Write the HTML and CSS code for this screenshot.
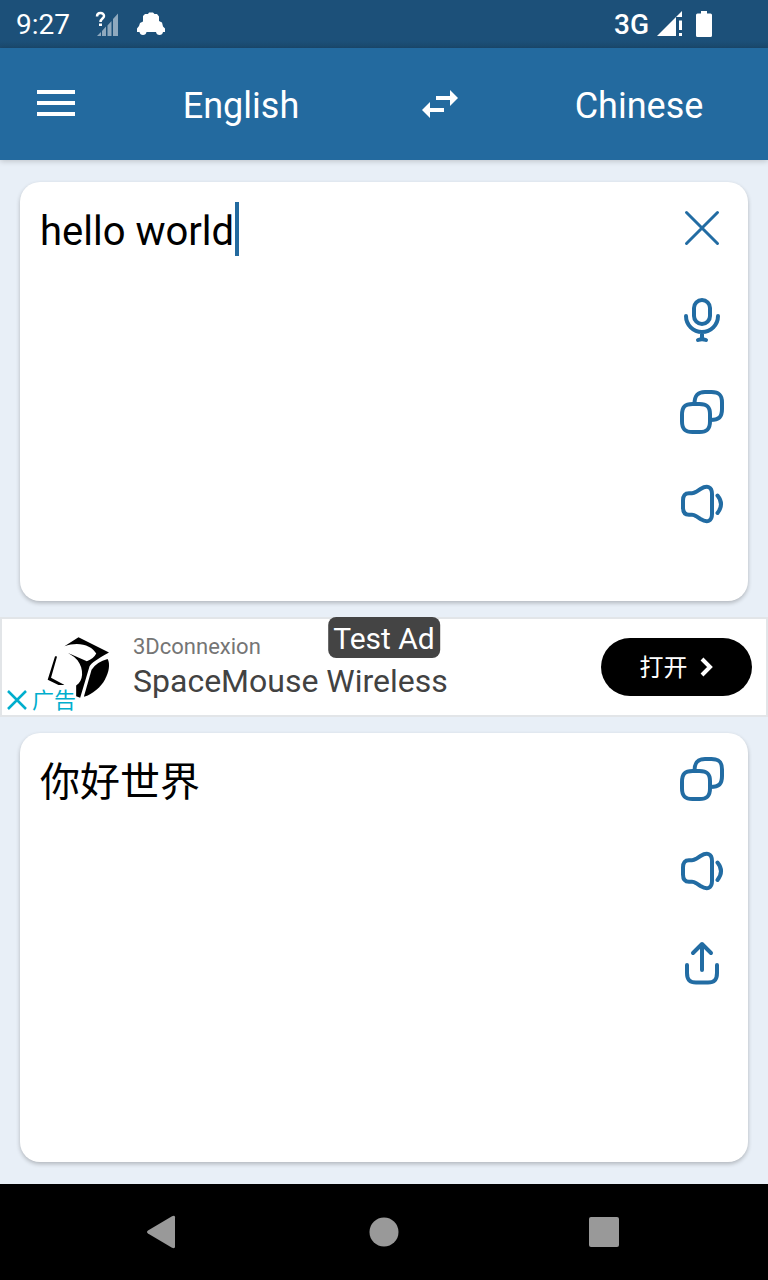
FILE: index.html
```html
<!DOCTYPE html>
<html lang="en">
<head>
<meta charset="utf-8">
<meta name="viewport" content="width=device-width, initial-scale=1">
<title>Translator</title>
<link rel="stylesheet" href="styles.css">
</head>
<body>
<svg class="sprite" aria-hidden="true">
  <symbol id="copy" viewBox="0 0 48 48">
    <path d="M4 27C4 18.500 7 16 14.500 16h7C29 16 32 18.500 32 26v7.500c0 7.500-3 10.500-10.500 10.500h-7C7 44 4 41 4 33.500Z"/>
    <path d="M16.500 16C16.500 7 20 4 27 4h6.500C41 4 44 7 44 14.500V21c0 8-3 11-11.500 11"/>
  </symbol>
  <symbol id="speaker" viewBox="0 0 48 48">
    <path d="M5 20.500c0-5 2-7.300 6-7.300h3c2 0 3-.7 4.500-1.600l4-2.600C29.500 4.700 34 7 34 14v20c0 7-4.500 9.300-11.500 5l-4-2.600c-1.500-.9-2.500-1.600-4.500-1.600h-3c-4 0-6-2.300-6-7.300Z"/>
    <path d="M39.500 15.500q7 8.500 0 17.500"/>
  </symbol>
</svg>

<header class="status">
  <time class="clock">9:27</time>
  <svg class="status-cell" width="24" height="28" viewBox="0 0 24 28" aria-hidden="true">
    <path fill="#8fa9be" d="M2 26l4-4v4zM7 21l4-4.500V26H7zM12.500 15.500l4-4.500v15h-4zM18 9l5-5.500V26h-5z"/>
    <path fill="none" stroke="#fff" stroke-width="2.500" d="M2 6.500C2 2 9 2 9 6c0 2.500-3.500 2.500-3.500 6"/>
    <path fill="#fff" d="M4 13.500h3V16H4z"/>
  </svg>
  <svg class="status-car" width="28" height="24" viewBox="0 0 28 24" aria-hidden="true">
    <path fill="#fff" d="M0 16.500L2 14 3 11l3-1.500V4l2-2h3l1-1.500h4L17.500 2H20l2 2.500v4.500l3 1.500 1 4 2 2V20h-2q-.5 3-3.500 3T19 20H9.500q-.5 3-3.500 3T2.500 20H0z"/>
  </svg>
  <span class="network">3G</span>
  <svg width="26" height="26" viewBox="0 0 26 26" aria-hidden="true">
    <path fill="#fff" d="M0 25L25 0v6h-6v19zM22 9.500h3V19h-3zM22 22h3v3h-3z"/>
  </svg>
  <svg class="battery" width="16" height="26" viewBox="0 0 16 26" aria-hidden="true">
    <path fill="#fff" d="M5 0h6v2.500h3.500Q16 2.500 16 4v20.500q0 1.500-1.500 1.500h-13Q0 26 0 24.500V4q0-1.500 1.500-1.500H5z"/>
  </svg>
</header>

<nav class="toolbar">
  <button class="menu" aria-label="Menu">
    <svg width="38" height="28" viewBox="0 0 38 28"><path fill="#fff" d="M0 0h38v4H0zM0 11h38v4H0zM0 22h38v4H0z"/></svg>
  </button>
  <button class="language">English</button>
  <button class="swap" aria-label="Swap languages">
    <svg width="36" height="28" viewBox="0 0 36 28"><path fill="#fff" d="M14 6h14V0l8 8-8 8v-6H14zM22 18H8v-6l-8 8 8 8v-6h14z"/></svg>
  </button>
  <button class="language">Chinese</button>
</nav>

<main class="content">
  <section class="card source">
    <div class="entry">
      <textarea class="text" aria-label="Text to translate" spellcheck="false">hello world</textarea>
      <span class="caret"></span>
    </div>
    <div class="actions">
      <button aria-label="Clear"><svg class="icon thin" viewBox="0 0 48 48"><path d="M8.500 8.500l31 31M39.500 8.500l-31 31"/></svg></button>
      <button aria-label="Speak"><svg class="icon" viewBox="0 0 48 48"><rect x="16" y="4" width="16" height="24" rx="8"/><path d="M8 20a16 16 0 0 0 32 0M24 36v7M20 44q4-1.500 8 0"/></svg></button>
      <button aria-label="Copy"><svg class="icon"><use href="#copy"/></svg></button>
      <button aria-label="Listen"><svg class="icon"><use href="#speaker"/></svg></button>
    </div>
  </section>

  <aside class="ad">
    <svg class="ad-logo" viewBox="135 135 200 190" aria-hidden="true">
      <path d="M193 168L235 141 326 187Q276 214 268 228L240 322 228 317V285C250 274 252 236 232 210Q222 198 204 188L260 213Q280 206 288 190C275 165 235 152 193 168Z"/>
      <path d="M322 206C330 222 326 244 314 267 303 288 278 311 251 319L274 238Q290 214 322 206Z"/>
      <path d="M165 198L171 199 153 262 192 283V286H180L143 268Z"/>
    </svg>
    <div class="ad-copy">
      <span class="advertiser">3Dconnexion</span>
      <span class="product">SpaceMouse Wireless</span>
    </div>
    <button class="open">打开
      <svg width="14" height="20" viewBox="0 0 14 20" aria-hidden="true"><path fill="none" stroke="#fff" stroke-width="4" d="M2 2l8 8-8 8"/></svg>
    </button>
    <button class="ad-choice">
      <svg width="20" height="20" viewBox="0 0 20 20" aria-hidden="true"><path fill="none" stroke="#00aecd" stroke-width="2.500" d="M1 1l18 18M19 1L1 19"/></svg>
      <span>广告</span>
    </button>
    <span class="test-label">Test Ad</span>
  </aside>

  <section class="card result">
    <p class="text">你好世界</p>
    <div class="actions">
      <button aria-label="Copy translation"><svg class="icon"><use href="#copy"/></svg></button>
      <button aria-label="Listen to translation"><svg class="icon"><use href="#speaker"/></svg></button>
      <button aria-label="Share"><svg class="icon" viewBox="0 0 48 48"><path d="M24 31V5M15 14l9-9 9 9M9 26v8c0 7 3 9.500 9 9.500h12c6 0 9-2.500 9-9.500v-8"/></svg></button>
    </div>
  </section>
</main>

<nav class="system-nav">
  <button aria-label="Back"><svg width="48" height="48" viewBox="0 0 48 48"><path fill="#999" d="M8 22.500L32 8.300q3-1.300 3 1v29.400q0 2.300-3 1L8 25.500q-2-1.500 0-3z"/></svg></button>
  <button aria-label="Home"><svg width="48" height="48" viewBox="0 0 48 48"><circle cx="24" cy="24" r="14.500" fill="#999"/></svg></button>
  <button aria-label="Recent apps"><svg width="48" height="48" viewBox="0 0 48 48"><rect x="9" y="9" width="30" height="30" rx="2" fill="#999"/></svg></button>
</nav>
</body>
</html>
```

FILE: styles.css
```css
* {
  box-sizing: border-box;
}

body {
  margin: 0;
  min-height: 100vh;
  display: flex;
  flex-direction: column;
  background: #e8eff7;
  color: #000;
  font-family: Roboto, "Noto Sans CJK SC", sans-serif;
}

button {
  display: flex;
  align-items: center;
  justify-content: center;
  padding: 0;
  border: 0;
  background: none;
  color: inherit;
  font: inherit;
}

svg {
  display: block;
  flex: none;
}

.sprite {
  position: absolute;
  width: 0;
  height: 0;
}

.status {
  height: 48px;
  padding: 0 56px 0 16px;
  display: flex;
  align-items: center;
  background: linear-gradient(#1c5079 40px, #1b4a6f);
  color: #fff;
  font-size: 28px;
  line-height: 48px;
}

.clock,
.network {
  padding-top: 2px;
}

.status-cell {
  margin-left: 25px;
}

.status-car {
  margin-left: 18px;
}

.network {
  margin-left: auto;
  margin-right: 8px;
  font-weight: 500;
}

.battery {
  margin-left: 13px;
}

.toolbar {
  height: 112px;
  display: flex;
  background: #236a9f;
  color: #fff;
  font-size: 36px;
  box-shadow: 0 1px 6px rgba(0, 0, 0, 0.2);
}

.menu {
  width: 112px;
}

.language {
  flex: 1;
  padding-top: 4px;
}

.swap {
  width: 140px;
}

.content {
  flex: 1;
  padding: 22px 0;
  display: flex;
  flex-direction: column;
  gap: 16px;
}

.card {
  margin: 0 20px;
  display: flex;
  border-radius: 20px;
  background: #fff;
  box-shadow: 0 2px 4px rgba(0, 0, 0, 0.24);
}

.source {
  flex: 419 1 0;
}

.result {
  flex: 429 1 0;
}

.entry {
  flex: 1;
  display: flex;
  position: relative;
}

.text {
  flex: 1;
  margin: 0;
  padding: 25px 0 20px 20px;
  border: 0;
  outline: 0;
  resize: none;
  background: none;
  color: #000;
  font: inherit;
  font-size: 40px;
  line-height: 50px;
}

.caret {
  position: absolute;
  left: 215px;
  top: 20px;
  width: 4px;
  height: 54px;
  background: #236a9f;
}

.actions button {
  width: 92px;
  height: 92px;
}

.icon {
  width: 48px;
  height: 48px;
  fill: none;
  stroke: #226ca3;
  stroke-width: 4;
  stroke-linecap: round;
  stroke-linejoin: round;
}

.thin {
  stroke-width: 3;
}

.ad {
  position: relative;
  height: 100px;
  padding: 0 14px 0 43px;
  display: flex;
  align-items: center;
  border: 2px solid #e2e5e8;
  background: #fff;
}

.ad-logo {
  width: 67px;
  height: 64px;
}

.ad-copy {
  flex: 1;
  margin-left: 21px;
  display: flex;
  flex-direction: column;
}

.advertiser {
  color: #757575;
  font-size: 22px;
  line-height: 28px;
}

.product {
  color: #424242;
  font-size: 32px;
  line-height: 40px;
}

.open {
  width: 151px;
  height: 58px;
  padding-bottom: 4px;
  gap: 12px;
  border-radius: 29px;
  background: #000;
  color: #fff;
  font-size: 24px;
}

.open svg {
  margin-top: 4px;
}

.ad-choice {
  position: absolute;
  left: 0;
  bottom: 0;
  height: 30px;
  padding-left: 5px;
  gap: 5px;
  background: #fff;
  color: #00aecd;
  font-size: 22px;
  line-height: 30px;
}

.ad-choice span {
  padding-top: 2px;
}

.test-label {
  position: absolute;
  left: 50%;
  top: -2px;
  transform: translateX(-50%);
  padding: 2px 5px 0;
  border-radius: 8px;
  background: #444;
  color: #fff;
  font-size: 30px;
  line-height: 39px;
  white-space: nowrap;
}

.system-nav {
  height: 96px;
  padding: 0 7%;
  display: flex;
  background: #000;
}

.system-nav button {
  flex: 1;
}
```
